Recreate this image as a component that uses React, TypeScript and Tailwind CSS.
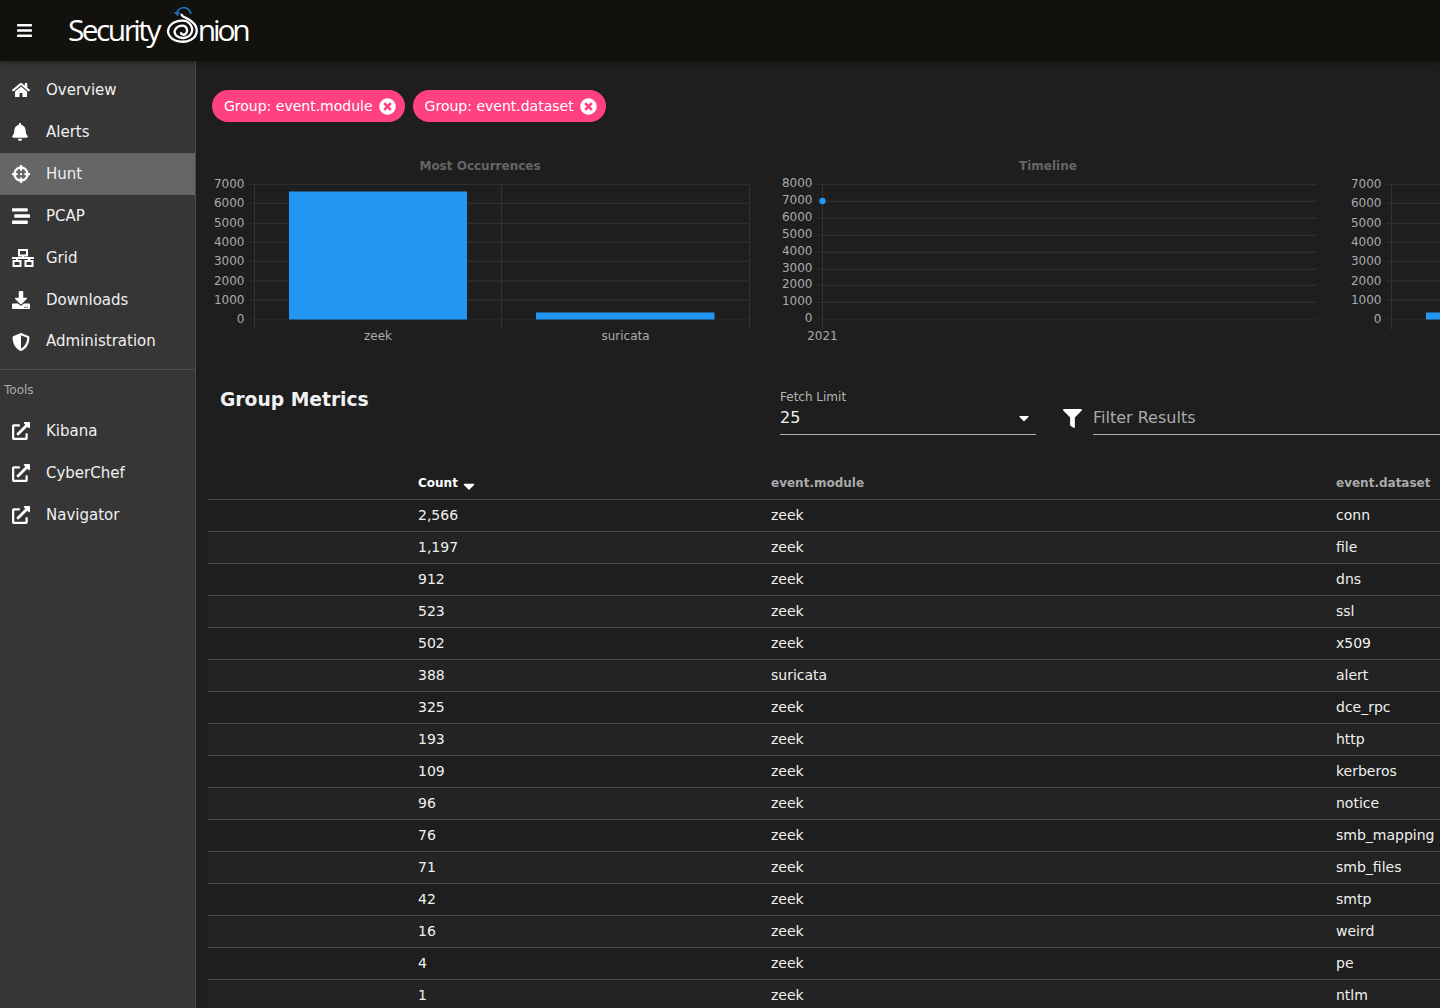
import React from "react";
import {
  FaHome, FaBell, FaCrosshairs, FaStream, FaDownload, FaShieldAlt,
  FaExternalLinkAlt, FaTimesCircle, FaFilter, FaBars, FaCaretDown,
} from "react-icons/fa";

function GridIcon() {
  return (
    <svg width="22" height="18" viewBox="0 0 22 18" fill="none" stroke="#ffffff" strokeWidth="2" className="ml-[0px]">
      <rect x="7" y="1" width="8" height="5.5" />
      <path d="M0 9 H22 M11 6.5 V9 M5 9 V12 M17 9 V12" />
      <rect x="1.5" y="12" width="7" height="5" />
      <rect x="13.5" y="12" width="7" height="5" />
    </svg>
  );
}

const nav = [
  { label: "Overview", icon: <FaHome className="text-white text-[18px]" />, cls: "h-[42px]" },
  { label: "Alerts", icon: <FaBell className="text-white text-[18px] ml-[-1px]" />, cls: "h-[42px]" },
  { label: "Hunt", icon: <FaCrosshairs className="text-white text-[18px]" />, cls: "h-[42px] bg-[#666666]" },
  { label: "PCAP", icon: <FaStream className="text-white text-[18px]" />, cls: "h-[42px]" },
  { label: "Grid", icon: <GridIcon />, cls: "h-[42px]" },
  { label: "Downloads", icon: <FaDownload className="text-white text-[18px]" />, cls: "h-[42px]" },
  { label: "Administration", icon: <FaShieldAlt className="text-white text-[18px]" />, cls: "h-[41px]" },
];
const tools = ["Kibana", "CyberChef", "Navigator"];
const rows: [string, string, string][] = [
  ["2,566", "zeek", "conn"], ["1,197", "zeek", "file"], ["912", "zeek", "dns"], ["523", "zeek", "ssl"],
  ["502", "zeek", "x509"], ["388", "suricata", "alert"], ["325", "zeek", "dce_rpc"], ["193", "zeek", "http"],
  ["109", "zeek", "kerberos"], ["96", "zeek", "notice"], ["76", "zeek", "smb_mapping"], ["71", "zeek", "smb_files"],
  ["42", "zeek", "smtp"], ["16", "zeek", "weird"], ["4", "zeek", "pe"], ["1", "zeek", "ntlm"],
];

const GRID = "#333333";
const LABEL = "#aaaaaa";
const FONT = "'DejaVu Sans', sans-serif";
const Y7 = [29.3, 48.3, 68.3, 87.3, 106.3, 126, 145, 164.3];
const Y8 = [29.3, 46.3, 63.3, 80.3, 97.3, 114.3, 130.3, 147.3, 164.3];

function YAxis({ ys, x, end, max, off = 3.5 }: { ys: number[]; x: number; end: number; max: number; off?: number }) {
  return (
    <>
      {ys.map((y, i) => (
        <g key={y}>
          <line x1={x - 5} x2={end} y1={y} y2={y} stroke={i === ys.length - 1 ? "#292929" : GRID} />
          <text x={x - 10} y={y + off} textAnchor="end" fontSize="12" fill={LABEL} fontFamily={FONT}>
            {max - i * 1000}
          </text>
        </g>
      ))}
    </>
  );
}

function Title({ children }: { children: string }) {
  return (
    <text x="284" y="15" textAnchor="middle" fontSize="12" fontWeight="700" fill="#666666" fontFamily={FONT}>
      {children}
    </text>
  );
}

function BarChart() {
  return (
    <svg width="568" height="190" className="block shrink-0">
      <Title>Most Occurrences</Title>
      <YAxis ys={Y7} x={58.5} end={553.5} max={7000} />
      {[58.5, 305.5, 553.5].map((x) => (
        <line key={x} x1={x} x2={x} y1={29} y2={174.5} stroke={GRID} />
      ))}
      <rect x="93" y="36.5" width="178" height="128" fill="#2196f3" />
      <rect x="340" y="157.5" width="178.5" height="7" fill="#2196f3" />
      <text x="182" y="185" textAnchor="middle" fontSize="12" fill={LABEL} fontFamily={FONT}>zeek</text>
      <text x="429.5" y="185" textAnchor="middle" fontSize="12" fill={LABEL} fontFamily={FONT}>suricata</text>
    </svg>
  );
}

function Timeline() {
  return (
    <svg width="568" height="190" className="block shrink-0">
      <Title>Timeline</Title>
      <YAxis ys={Y8} x={58.5} end={553} max={8000} off={3} />
      <line x1={58.5} x2={58.5} y1={29} y2={174.5} stroke={GRID} />
      <circle cx="58.5" cy="46" r="3.2" fill="#2196f3" />
      <text x="58.5" y="185" textAnchor="middle" fontSize="12" fill={LABEL} fontFamily={FONT}>2021</text>
    </svg>
  );
}

function ThirdChart() {
  return (
    <svg width="568" height="190" className="block shrink-0">
      <YAxis ys={Y7} x={59.5} end={568} max={7000} />
      <line x1={59.5} x2={59.5} y1={29} y2={174.5} stroke={GRID} />
      <rect x="94" y="157.5" width="100" height="7" fill="#2196f3" />
    </svg>
  );
}

function Logo() {
  return (
    <div className="flex items-center text-white font-['Open_Sans',sans-serif] font-normal text-[30px] leading-none ml-[35px] mt-[-2px]">
      <span className="tracking-[-2.6px]">Security</span>
      <svg width="34" height="44" viewBox="495 9 102 132" className="shrink-0 ml-[7px] mt-[-12px]" fill="none">
        <path d="M541 44 C541 55 560 55 575 70 C592 85 592 110 570 122 C548 134 515 128 504 108 C493 85 515 65 545 65 C565 65 578 85 572 100 C565 118 540 122 526 110 C514 98 525 80 545 80 C555 80 562 92 556 102 C550 110 540 108 540 100" stroke="#ffffff" strokeWidth="7" />
        <path d="M526 45 C530 25 560 15 570 45" stroke="#1f6fc0" strokeWidth="5" />
        <path d="M518 40 L537 38 L530 52 Z" fill="#1f6fc0" />
      </svg>
      <span className="ml-[-2px] tracking-[-3.2px]">nion</span>
    </div>
  );
}

export default function App() {
  return (
    <div className="h-[1008px] w-[1440px] overflow-hidden bg-[#1e1e1e] font-['DejaVu_Sans',sans-serif] flex flex-col">
      <header className="h-[61px] shrink-0 bg-[#12110e] flex items-center pl-4 shadow-[0_2px_4px_rgba(0,0,0,0.35)] z-10">
        <FaBars className="text-white text-[17px]" />
        <Logo />
      </header>
      <div className="flex flex-1 min-h-0">
        <nav className="w-[196px] shrink-0 bg-[#363636] border-r border-r-[#4a4a4a] pt-2">
          {nav.map(({ label, icon, cls }) => (
            <div key={label} className={`flex items-center pl-3 text-[15px] text-[#f0f0f0] ${cls}`}>
              <span className="w-[34px] shrink-0">{icon}</span>
              {label}
            </div>
          ))}
          <div className="border-t border-t-[#4f4f4f] mt-[7px] h-[41px] flex items-center pl-1 text-[12px] text-[#aaaaaa]">Tools</div>
          <div>
            {tools.map((t) => (
              <div key={t} className="flex items-center h-[42px] pl-3 text-[15px] text-[#f0f0f0]">
                <span className="w-[34px] shrink-0"><FaExternalLinkAlt className="text-white text-[18px]" /></span>
                {t}
              </div>
            ))}
          </div>
        </nav>
        <main className="flex-1 min-w-0 overflow-hidden">
          <div className="flex gap-2 pl-4 pt-[29px]">
            {["Group: event.module", "Group: event.dataset"].map((c) => (
              <div key={c} className="h-8 rounded-full bg-[#ff4081] text-white text-[14px] flex items-center pl-3 pr-[9px] whitespace-nowrap">
                {c}
                <FaTimesCircle className="ml-[6px] text-[17px]" />
              </div>
            ))}
          </div>
          <div className="flex w-[1704px] mt-[33px]">
            <BarChart />
            <Timeline />
            <ThirdChart />
          </div>
          <div className="flex mt-[36px] h-[86px] items-start">
            <h2 className="w-[584px] pl-6 pt-[4px] text-[18.72px] leading-[30px] font-bold text-[#f2f2f2] shrink-0">Group Metrics</h2>
            <div className="w-[256px] shrink-0 pt-[7px]">
              <div className="text-[12px] leading-[16px] text-[#b5b5b5] pt-[1px]">Fetch Limit</div>
              <div className="flex items-center justify-between h-[29px] border-b border-b-[#b0b0b0] text-[16px] text-[#f0f0f0] mt-[1px] pb-[4px]">
                <span>25</span>
                <FaCaretDown className="text-white text-[16px] mr-[4px]" />
              </div>
            </div>
            <FaFilter className="text-white text-[19px] shrink-0 ml-[27px] mr-[11px] mt-[28px]" />
            <div className="flex-1 h-[54px] border-b border-b-[#b0b0b0] flex items-end pb-[4px] text-[16px] text-[#aaaaaa]">Filter Results</div>
          </div>
          <div className="pl-3">
            <table className="table-fixed w-[1400px] border-collapse text-[14px] text-[#f0f0f0]">
              <colgroup>
                <col className="w-[194px]" />
                <col className="w-[353px]" />
                <col className="w-[565px]" />
                <col />
              </colgroup>
              <thead>
                <tr className="h-[32px] border-b border-b-[#4a4a4a] text-[12px] font-bold text-left">
                  <th></th>
                  <th className="pl-4 text-white font-bold"><span className="inline-flex items-center gap-[2px]">Count <FaCaretDown className="text-[18px] mt-[6px]" /></span></th>
                  <th className="pl-4 text-[#aaaaaa] font-bold">event.module</th>
                  <th className="pl-4 text-[#aaaaaa] font-bold">event.dataset</th>
                </tr>
              </thead>
              <tbody>
                {rows.map(([count, mod, ds]) => (
                  <tr key={count} className="h-[32px] border-b border-b-[#4a4a4a] even:bg-[#232323]">
                    <td></td>
                    <td className="pl-4">{count}</td>
                    <td className="pl-4">{mod}</td>
                    <td className="pl-4">{ds}</td>
                  </tr>
                ))}
              </tbody>
            </table>
          </div>
        </main>
      </div>
    </div>
  );
}
